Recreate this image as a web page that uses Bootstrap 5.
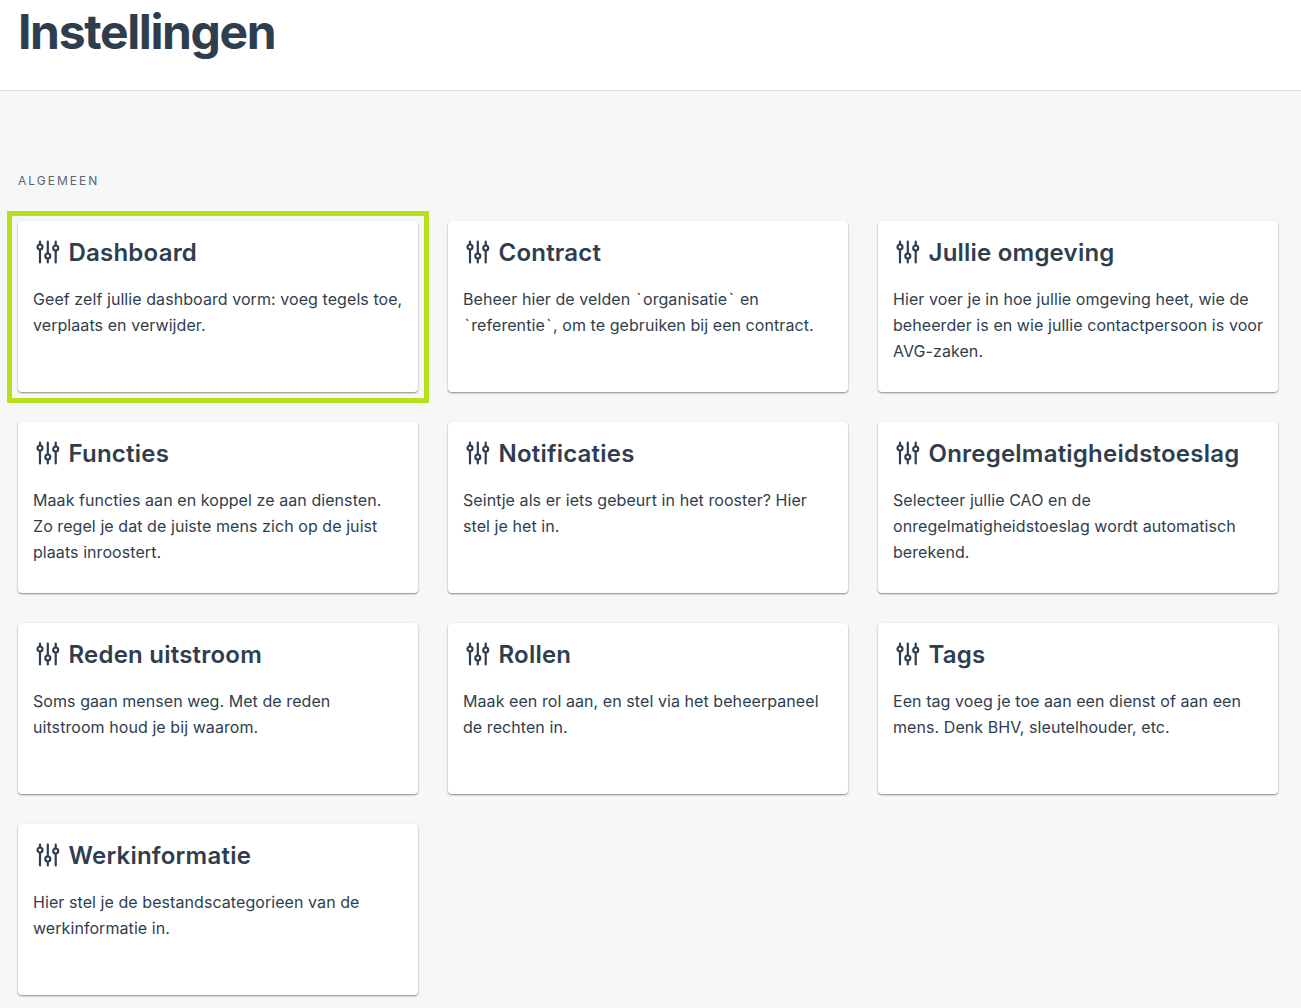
<!DOCTYPE html>
<html lang="nl">
<head>
<meta charset="utf-8">
<title>Instellingen</title>
<link href="https://cdn.jsdelivr.net/npm/bootstrap@5.3.0/dist/css/bootstrap.min.css" rel="stylesheet">
<style>
html,body{height:1008px;overflow:hidden}
body{background:#f7f7f7;font-family:Inter,"Liberation Sans",sans-serif;color:#2f3e4e}
.top-strip{background:#fff;height:91px;border-bottom:1px solid #dcdcdc;padding-left:18px}
.page-title{font-size:48px;font-weight:700;line-height:64px;letter-spacing:-1.36px;color:#2f3e4e;margin:0}
.section-label{font-size:12px;line-height:16px;letter-spacing:2px;color:#5a6672;margin:0;padding-top:82px;padding-left:18px}
.tile-grid{display:grid;grid-template-columns:repeat(3,400px);grid-auto-rows:171px;gap:30px;padding-left:18px;padding-top:32px}
.tile{position:relative;background:#fff;border-radius:4px;box-shadow:0 1px 2px rgba(0,0,0,.45);padding:16px 12px 15px 15px}
.tile.active-tile::after{content:"";position:absolute;left:-11px;right:-11px;top:-10px;bottom:-11px;border:5px solid #b4e31a;pointer-events:none}
.tile-head{display:flex;align-items:center;gap:7.500px;font-size:24px;font-weight:600;line-height:32px;color:#2f3e4e;margin:0 0 17px;letter-spacing:.22px}
.tile-head svg{flex:none;width:28px;height:28px}
.tile-text{font-size:16px;line-height:26px;margin:0;color:#2f3e4e;letter-spacing:.07px}
.tick{padding:0 1.500px}
</style>
</head>
<body>
<svg width="0" height="0" class="d-block">
<symbol id="sliders" viewBox="0 0 28 28">
<g fill="none" stroke="#2f3e4e" stroke-width="2.200" stroke-linecap="round">
<path d="M7 2.500v3M7 11v12.500M14.800 2.500v12M14.800 20v3.500M22.700 2.500v4M22.700 12v11.500"/>
<circle cx="7" cy="8" r="2.500"/><circle cx="14.800" cy="17" r="2.500"/><circle cx="22.700" cy="9" r="2.500"/>
</g>
</symbol>
</svg>
<header class="top-strip"><h1 class="page-title">Instellingen</h1></header>
<p class="section-label">ALGEMEEN</p>
<main class="tile-grid">
<div class="tile active-tile"><h2 class="tile-head"><svg><use href="#sliders"/></svg>Dashboard</h2><p class="tile-text">Geef zelf jullie dashboard vorm: voeg tegels toe, verplaats en verwijder.</p></div>
<div class="tile"><h2 class="tile-head"><svg><use href="#sliders"/></svg>Contract</h2><p class="tile-text">Beheer hier de velden <span class="tick">`</span>organisatie<span class="tick">`</span> en<br><span class="tick">`</span>referentie<span class="tick">`</span>, om te gebruiken bij een contract.</p></div>
<div class="tile"><h2 class="tile-head"><svg><use href="#sliders"/></svg>Jullie omgeving</h2><p class="tile-text">Hier voer je in hoe jullie omgeving heet, wie de beheerder is en wie jullie contactpersoon is voor AVG-zaken.</p></div>
<div class="tile"><h2 class="tile-head"><svg><use href="#sliders"/></svg>Functies</h2><p class="tile-text">Maak functies aan en koppel ze aan diensten.<br>Zo regel je dat de juiste mens zich op de juist plaats inroostert.</p></div>
<div class="tile"><h2 class="tile-head"><svg><use href="#sliders"/></svg>Notificaties</h2><p class="tile-text">Seintje als er iets gebeurt in het rooster? Hier stel je het in.</p></div>
<div class="tile"><h2 class="tile-head"><svg><use href="#sliders"/></svg>Onregelmatigheidstoeslag</h2><p class="tile-text">Selecteer jullie CAO en de<br>onregelmatigheidstoeslag wordt automatisch berekend.</p></div>
<div class="tile"><h2 class="tile-head"><svg><use href="#sliders"/></svg>Reden uitstroom</h2><p class="tile-text">Soms gaan mensen weg. Met de reden<br>uitstroom houd je bij waarom.</p></div>
<div class="tile"><h2 class="tile-head"><svg><use href="#sliders"/></svg>Rollen</h2><p class="tile-text">Maak een rol aan, en stel via het beheerpaneel de rechten in.</p></div>
<div class="tile"><h2 class="tile-head"><svg><use href="#sliders"/></svg>Tags</h2><p class="tile-text">Een tag voeg je toe aan een dienst of aan een mens. Denk BHV, sleutelhouder, etc.</p></div>
<div class="tile"><h2 class="tile-head"><svg><use href="#sliders"/></svg>Werkinformatie</h2><p class="tile-text">Hier stel je de bestandscategorieen van de werkinformatie in.</p></div>
</main>
</body>
</html>
